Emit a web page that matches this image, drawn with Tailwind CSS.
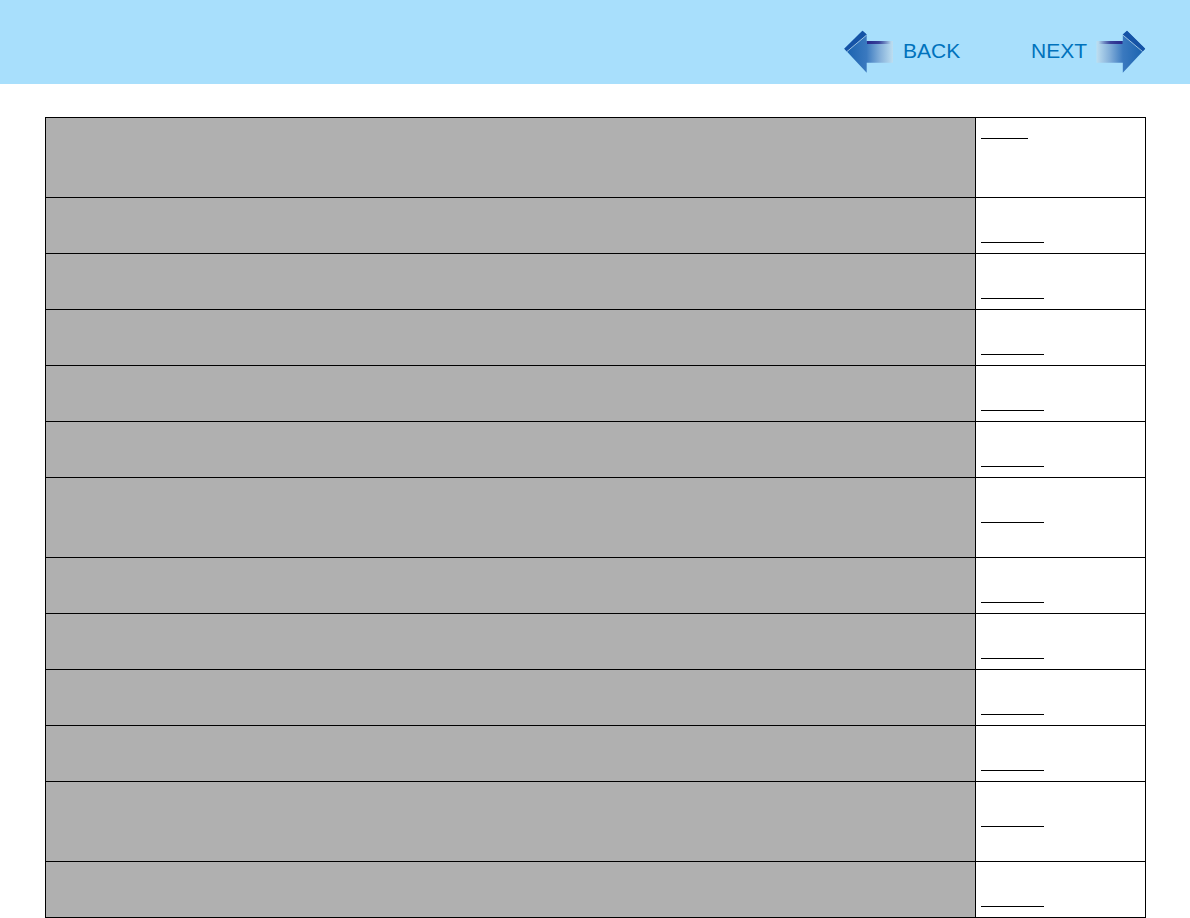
<!DOCTYPE html>
<html lang="en">
<head>
    <meta charset="UTF-8">
    <title>Reference manual page</title>
    <script src="https://cdn.jsdelivr.net/npm/@tailwindcss/browser@4"></script>
</head>
<body class="bg-white font-['Liberation_Sans',Arial,sans-serif]">
    <!-- top bar with nav arrows -->
    <header class="h-[84px] bg-[#a8dffc] flex pl-[840px] pt-[26px] text-[21px] leading-[50px] text-[#0072bc]">
        <svg class="w-[60px] h-[52px] shrink-0" viewBox="0 0 60 52">
            <defs>
                <linearGradient id="fill" gradientUnits="userSpaceOnUse" x1="4" y1="0" x2="54" y2="0">
                    <stop offset="0" stop-color="#1660ae"/>
                    <stop offset="0.45" stop-color="#3a79bf"/>
                    <stop offset="0.72" stop-color="#84b0da"/>
                    <stop offset="1" stop-color="#c2e2f2"/>
                </linearGradient>
                <linearGradient id="band" gradientUnits="userSpaceOnUse" x1="27" y1="0" x2="51" y2="0">
                    <stop offset="0" stop-color="#2a2a8c"/>
                    <stop offset="0.5" stop-color="#2a2a8c" stop-opacity="0.8"/>
                    <stop offset="1" stop-color="#2a2a8c" stop-opacity="0"/>
                </linearGradient>
            </defs>
            <polygon points="4.3,22.7 22.5,4.7 26.7,8.5 26.7,15 53,15 53,36.7 26.7,36.7 26.7,46.7" fill="url(#fill)"/>
            <polygon points="4.3,22.7 22.5,4.7 26.7,8.5 7,25.5" fill="#1553a6"/>
            <line x1="7" y1="25.5" x2="26.7" y2="9" stroke="#b9d8ec" stroke-width="0.8"/>
            <rect x="27" y="15" width="24" height="3" fill="url(#band)"/>
        </svg>
        <span class="ml-[3px] w-[128px]">BACK</span>
        <span class="w-[59px]">NEXT</span>
        <svg class="w-[60px] h-[52px] shrink-0" viewBox="0 0 60 52">
            <g transform="translate(59.5 0) scale(-1 1)">
                <polygon points="4.3,22.7 22.5,4.7 26.7,8.5 26.7,15 53,15 53,36.7 26.7,36.7 26.7,46.7" fill="url(#fill)"/>
                <polygon points="4.3,22.7 22.5,4.7 26.7,8.5 7,25.5" fill="#1553a6"/>
                <line x1="7" y1="25.5" x2="26.7" y2="9" stroke="#b9d8ec" stroke-width="0.8"/>
                <rect x="27" y="15" width="24" height="3" fill="url(#band)"/>
            </g>
        </svg>
    </header>

    <main class="ml-[45px] mt-[33px] w-[1101px] border-t border-l border-black">
        <div class="flex h-[80px]">
            <div class="w-[930px] bg-[#b0b0b0] border-r border-b border-black"></div>
            <div class="w-[170px] border-r border-b border-black pl-[5px] pt-[20px]"><div class="w-[47px] h-px bg-black"></div></div>
        </div>
        <div class="flex h-[56px]">
            <div class="w-[930px] bg-[#b0b0b0] border-r border-b border-black"></div>
            <div class="w-[170px] border-r border-b border-black pl-[5px] pt-[44px]"><div class="w-[63px] h-px bg-black"></div></div>
        </div>
        <div class="flex h-[56px]">
            <div class="w-[930px] bg-[#b0b0b0] border-r border-b border-black"></div>
            <div class="w-[170px] border-r border-b border-black pl-[5px] pt-[44px]"><div class="w-[63px] h-px bg-black"></div></div>
        </div>
        <div class="flex h-[56px]">
            <div class="w-[930px] bg-[#b0b0b0] border-r border-b border-black"></div>
            <div class="w-[170px] border-r border-b border-black pl-[5px] pt-[44px]"><div class="w-[63px] h-px bg-black"></div></div>
        </div>
        <div class="flex h-[56px]">
            <div class="w-[930px] bg-[#b0b0b0] border-r border-b border-black"></div>
            <div class="w-[170px] border-r border-b border-black pl-[5px] pt-[44px]"><div class="w-[63px] h-px bg-black"></div></div>
        </div>
        <div class="flex h-[56px]">
            <div class="w-[930px] bg-[#b0b0b0] border-r border-b border-black"></div>
            <div class="w-[170px] border-r border-b border-black pl-[5px] pt-[44px]"><div class="w-[63px] h-px bg-black"></div></div>
        </div>
        <div class="flex h-[80px]">
            <div class="w-[930px] bg-[#b0b0b0] border-r border-b border-black"></div>
            <div class="w-[170px] border-r border-b border-black pl-[5px] pt-[44px]"><div class="w-[63px] h-px bg-black"></div></div>
        </div>
        <div class="flex h-[56px]">
            <div class="w-[930px] bg-[#b0b0b0] border-r border-b border-black"></div>
            <div class="w-[170px] border-r border-b border-black pl-[5px] pt-[44px]"><div class="w-[63px] h-px bg-black"></div></div>
        </div>
        <div class="flex h-[56px]">
            <div class="w-[930px] bg-[#b0b0b0] border-r border-b border-black"></div>
            <div class="w-[170px] border-r border-b border-black pl-[5px] pt-[44px]"><div class="w-[63px] h-px bg-black"></div></div>
        </div>
        <div class="flex h-[56px]">
            <div class="w-[930px] bg-[#b0b0b0] border-r border-b border-black"></div>
            <div class="w-[170px] border-r border-b border-black pl-[5px] pt-[44px]"><div class="w-[63px] h-px bg-black"></div></div>
        </div>
        <div class="flex h-[56px]">
            <div class="w-[930px] bg-[#b0b0b0] border-r border-b border-black"></div>
            <div class="w-[170px] border-r border-b border-black pl-[5px] pt-[44px]"><div class="w-[63px] h-px bg-black"></div></div>
        </div>
        <div class="flex h-[80px]">
            <div class="w-[930px] bg-[#b0b0b0] border-r border-b border-black"></div>
            <div class="w-[170px] border-r border-b border-black pl-[5px] pt-[44px]"><div class="w-[63px] h-px bg-black"></div></div>
        </div>
        <div class="flex h-[56px]">
            <div class="w-[930px] bg-[#b0b0b0] border-r border-b border-black"></div>
            <div class="w-[170px] border-r border-b border-black pl-[5px] pt-[44px]"><div class="w-[63px] h-px bg-black"></div></div>
        </div>
    </main>
</body>
</html>
